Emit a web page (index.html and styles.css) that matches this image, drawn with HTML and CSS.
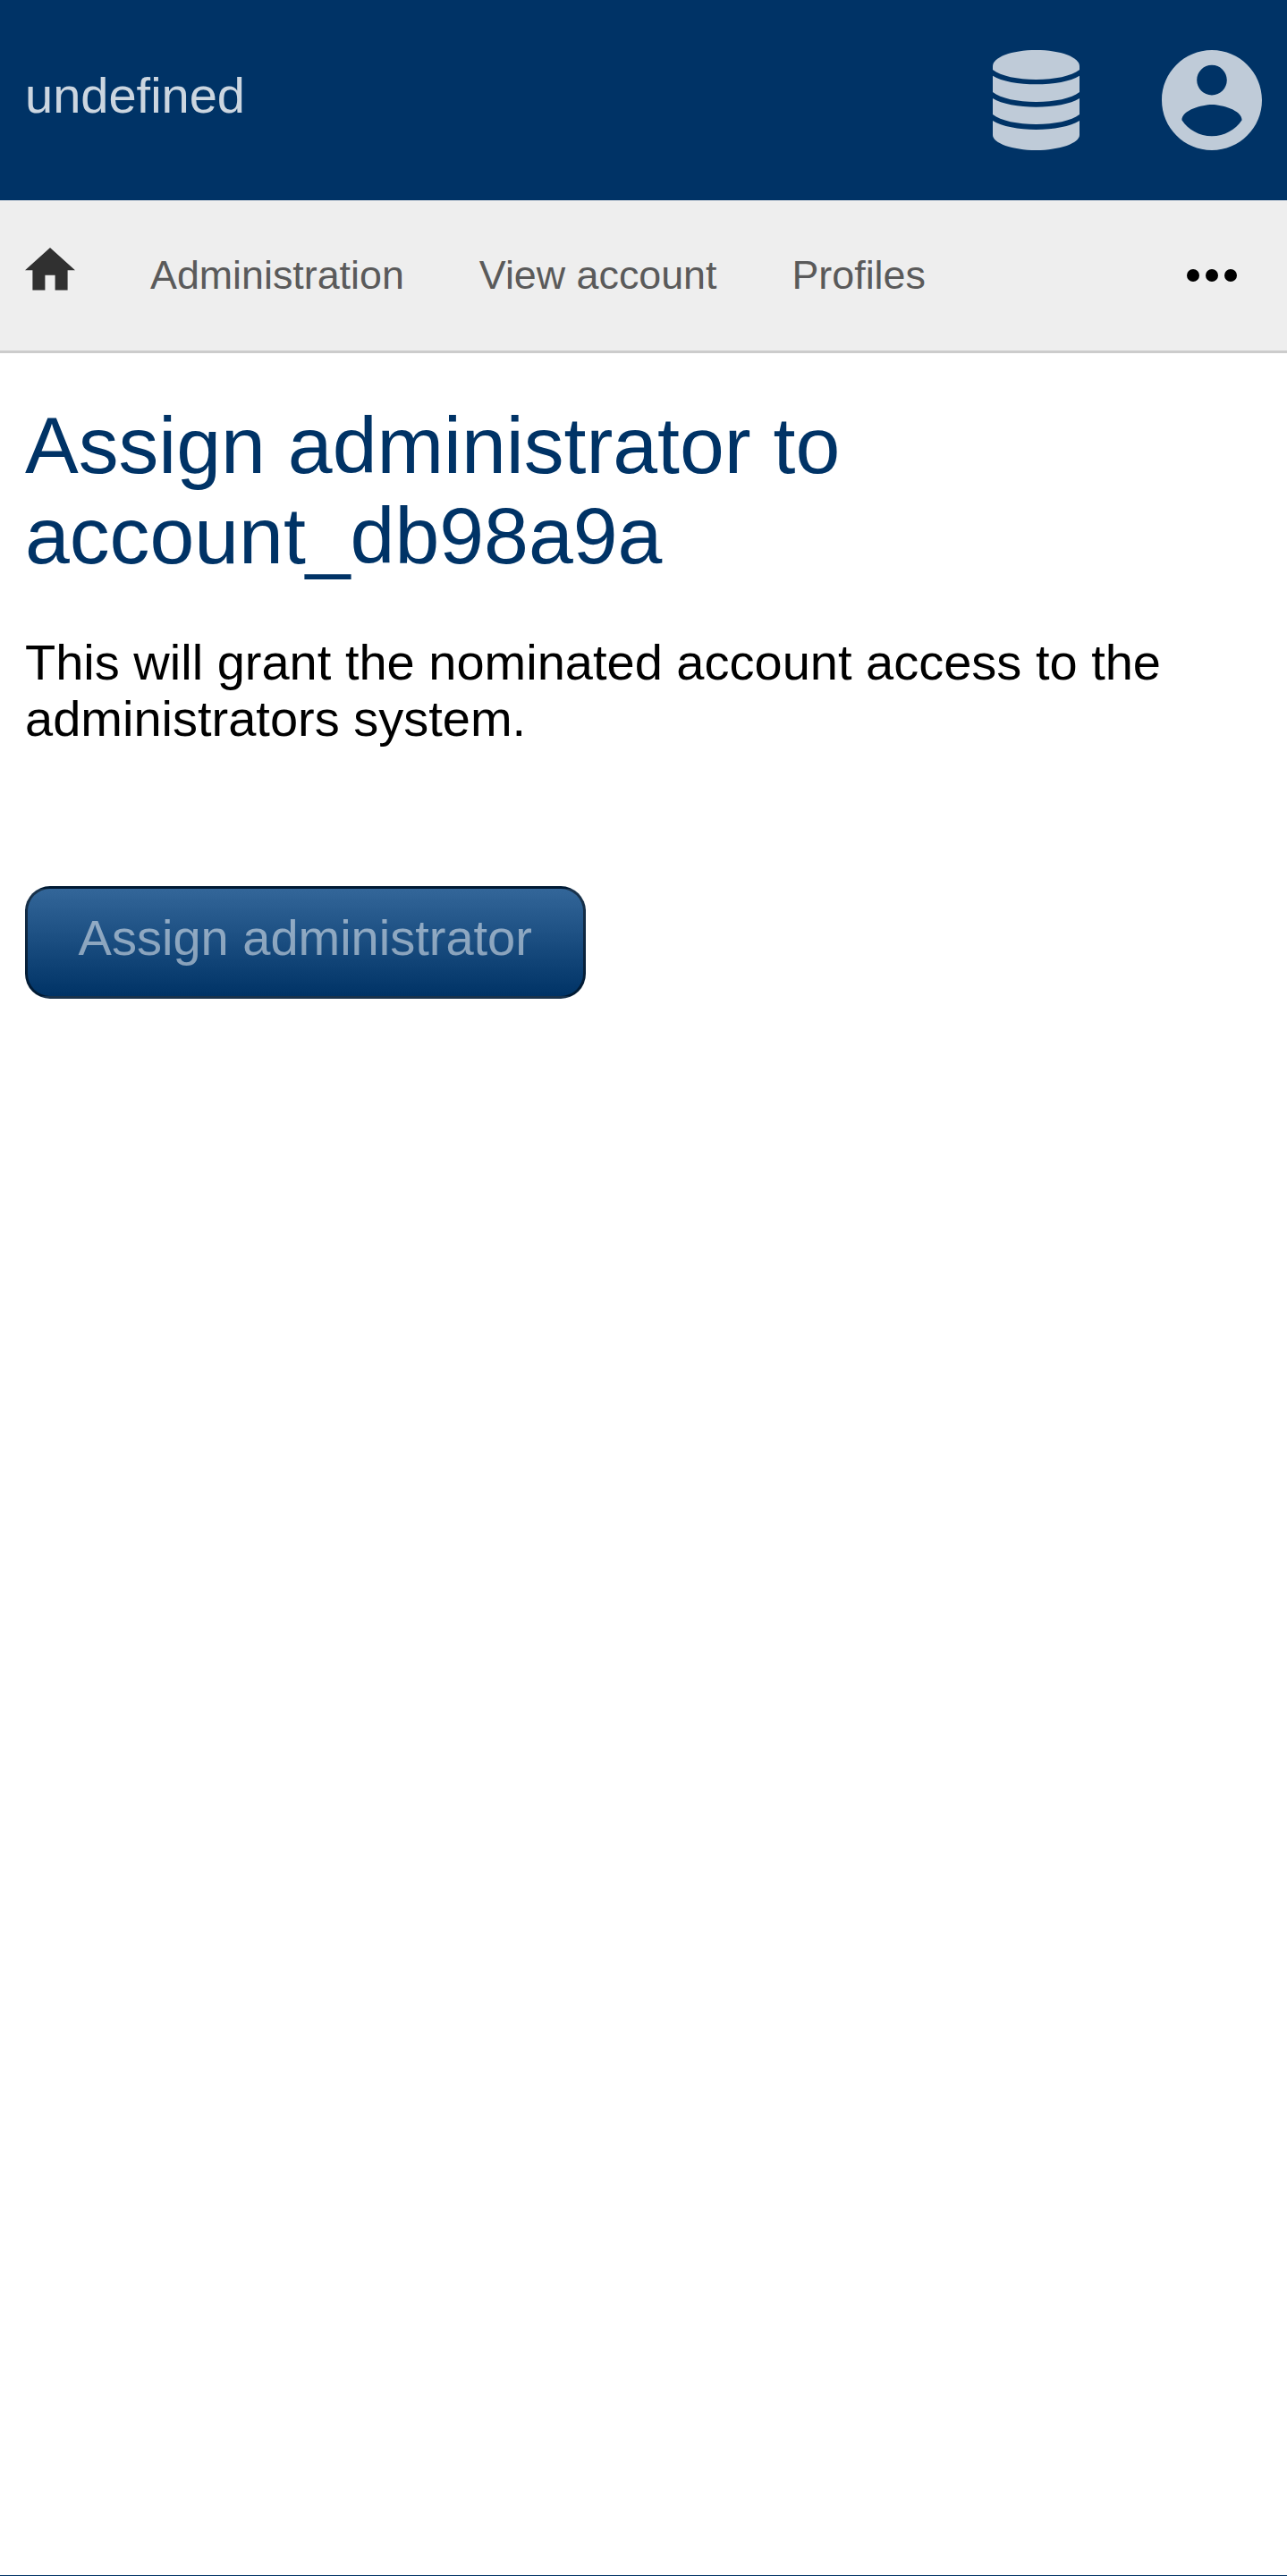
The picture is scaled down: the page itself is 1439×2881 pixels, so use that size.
FILE: index.html
```html
<!DOCTYPE html>
<html lang="en">
<head>
<meta charset="utf-8">
<title>Assign administrator</title>
<link rel="stylesheet" href="styles.css">
</head>
<body>
<header class="banner">
  <span class="banner-title">undefined</span>
  <div class="banner-icons">
    <svg class="icon-database" viewBox="0 0 97 112" aria-hidden="true">
      <path d="M0 18C0 8 21 0 48.500 0S97 8 97 18V22C88 29 69 33 48.500 33S9 29 0 22Z"/>
      <path d="M0 28.700C10 35 29 38.300 48.500 38.300S87 35 97 28.700V47C88 54 69 58 48.500 58S9 54 0 47Z"/>
      <path d="M0 54C10 60.300 29 63.700 48.500 63.700S87 60.300 97 54V72C88 79 69 83 48.500 83S9 79 0 72Z"/>
      <path d="M0 79C10 85.300 29 89 48.500 89S87 85.300 97 79V95C97 104 75 112 48.500 112S0 104 0 95Z"/>
    </svg>
    <svg class="icon-account" viewBox="2 2 20 20" aria-hidden="true">
      <path d="M12 2C6.480 2 2 6.480 2 12s4.480 10 10 10 10-4.480 10-10S17.520 2 12 2zm0 3c1.660 0 3 1.340 3 3s-1.340 3-3 3-3-1.340-3-3 1.340-3 3-3zm0 14.200c-2.500 0-4.710-1.280-6-3.220.03-1.990 4-3.080 6-3.080 1.990 0 5.970 1.090 6 3.080-1.290 1.940-3.500 3.220-6 3.220z"/>
    </svg>
  </div>
</header>
<nav class="menu">
  <a class="menu-home" aria-label="Home">
    <svg class="icon-home" viewBox="2 3 20 17"><path d="M10 20v-6h4v6h5v-8h3L12 3 2 12h3v8z"/></svg>
  </a>
  <a class="menu-link">Administration</a>
  <a class="menu-link">View account</a>
  <a class="menu-link">Profiles</a>
  <svg class="icon-more" viewBox="0 0 56 14" aria-hidden="true">
    <circle cx="7" cy="7" r="7"/><circle cx="28" cy="7" r="7"/><circle cx="49" cy="7" r="7"/>
  </svg>
</nav>
<main class="content">
  <h1>Assign administrator to account_db98a9a</h1>
  <p>This will grant the nominated account access to the administrators system.</p>
  <button class="submit" type="button" disabled>Assign administrator</button>
</main>
<footer class="footer"></footer>
</body>
</html>
```

FILE: styles.css
```css
* {
  box-sizing: border-box;
}

body {
  display: flex;
  flex-direction: column;
  min-height: 2881px;
  margin: 0;
  background: #fff;
  color: #000;
  font-family: "Liberation Sans", Arial, sans-serif;
  font-size: 56px;
  line-height: 63px;
}

.banner {
  display: flex;
  align-items: center;
  justify-content: space-between;
  height: 224px;
  padding: 0 28px;
  background: #036;
}

.banner-title {
  padding-bottom: 12px;
  color: rgba(255, 255, 255, 0.8);
}

.banner-icons {
  display: flex;
  gap: 92px;
  fill: rgba(255, 255, 255, 0.75);
}

.icon-database {
  width: 97px;
  height: 112px;
}

.icon-account {
  width: 112px;
  height: 112px;
}

.menu {
  display: flex;
  align-items: center;
  gap: 84px;
  height: 171px;
  padding: 0 56px 0 28px;
  border-bottom: 3px solid #ccc;
  background: #eee;
  color: #5a5a5a;
  font-size: 44.8px;
  line-height: 50px;
}

.menu-home {
  display: flex;
  padding-bottom: 14px;
}

.menu-link {
  padding-bottom: 3px;
}

.icon-home {
  width: 56px;
  height: 47.6px;
  fill: #303030;
}

.icon-more {
  width: 56px;
  height: 14px;
  margin-left: auto;
}

.content {
  flex: 1;
  padding: 53px 28px 0;
}

h1 {
  max-width: 1100px;
  margin: 0;
  color: #036;
  font-size: 89.6px;
  font-weight: 400;
  line-height: 101px;
}

p {
  margin: 59px 0 0;
}

.submit {
  display: block;
  width: 626.5px;
  height: 126px;
  margin: 155.5px 0 0;
  padding: 0 0 10px;
  border: 3px solid rgba(0, 0, 0, 0.5);
  border-radius: 28px;
  background: linear-gradient(#369, #036);
  color: rgba(255, 255, 255, 0.5);
  font: inherit;
}

.footer {
  height: 1px;
  background: #036;
}
```
